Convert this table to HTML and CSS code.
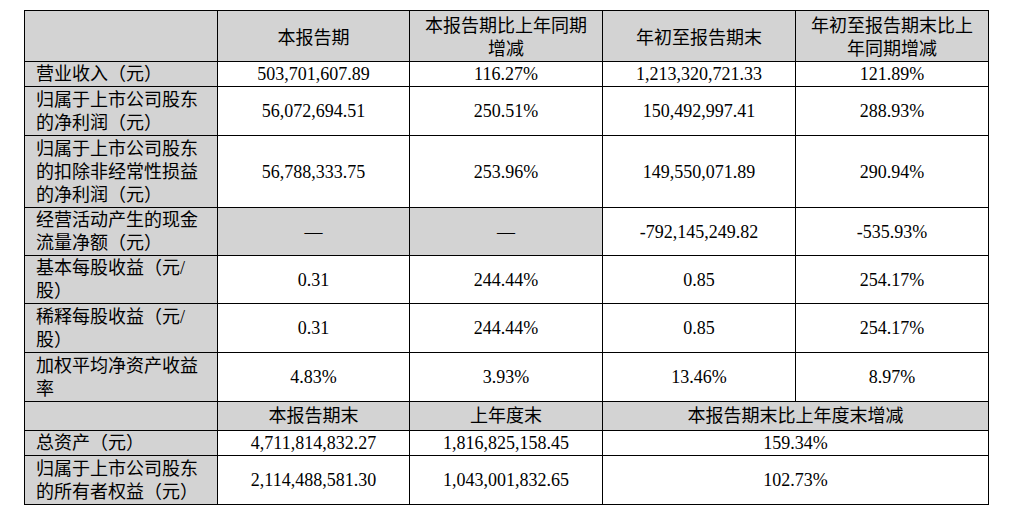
FILE: index.html
```html
<!DOCTYPE html>
<html lang="zh-CN">
<head>
<meta charset="utf-8">
<title>主要财务数据</title>
<link rel="stylesheet" href="styles.css">
</head>
<body>
<table class="fin">
  <colgroup>
    <col class="c-label"><col class="c-a"><col class="c-b"><col class="c-c"><col class="c-d">
  </colgroup>
  <tr class="h49 head">
    <th class="gray"></th>
    <th class="gray">本报告期</th>
    <th class="gray">本报告期比上年同期<br>增减</th>
    <th class="gray">年初至报告期末</th>
    <th class="gray">年初至报告期末比上<br>年同期增减</th>
  </tr>
  <tr class="h24">
    <td class="label">营业收入（元）</td>
    <td>503,701,607.89</td>
    <td>116.27%</td>
    <td>1,213,320,721.33</td>
    <td>121.89%</td>
  </tr>
  <tr class="h49">
    <td class="label">归属于上市公司股东<br>的净利润（元）</td>
    <td>56,072,694.51</td>
    <td>250.51%</td>
    <td>150,492,997.41</td>
    <td>288.93%</td>
  </tr>
  <tr class="h72">
    <td class="label">归属于上市公司股东<br>的扣除非经常性损益<br>的净利润（元）</td>
    <td>56,788,333.75</td>
    <td>253.96%</td>
    <td>149,550,071.89</td>
    <td>290.94%</td>
  </tr>
  <tr class="h48">
    <td class="label">经营活动产生的现金<br>流量净额（元）</td>
    <td class="gray">—</td>
    <td class="gray">—</td>
    <td>-792,145,249.82</td>
    <td>-535.93%</td>
  </tr>
  <tr class="h48">
    <td class="label">基本每股收益（元/<br>股）</td>
    <td>0.31</td>
    <td>244.44%</td>
    <td>0.85</td>
    <td>254.17%</td>
  </tr>
  <tr class="h49">
    <td class="label">稀释每股收益（元/<br>股）</td>
    <td>0.31</td>
    <td>244.44%</td>
    <td>0.85</td>
    <td>254.17%</td>
  </tr>
  <tr class="h49">
    <td class="label">加权平均净资产收益<br>率</td>
    <td>4.83%</td>
    <td>3.93%</td>
    <td>13.46%</td>
    <td>8.97%</td>
  </tr>
  <tr class="h29">
    <th class="gray"></th>
    <th class="gray">本报告期末</th>
    <th class="gray">上年度末</th>
    <th class="gray" colspan="2">本报告期末比上年度末增减</th>
  </tr>
  <tr class="h24">
    <td class="label">总资产（元）</td>
    <td>4,711,814,832.27</td>
    <td>1,816,825,158.45</td>
    <td colspan="2">159.34%</td>
  </tr>
  <tr class="h49">
    <td class="label">归属于上市公司股东<br>的所有者权益（元）</td>
    <td>2,114,488,581.30</td>
    <td>1,043,001,832.65</td>
    <td colspan="2">102.73%</td>
  </tr>
</table>
</body>
</html>
```

FILE: styles.css
```css
html, body {
  margin: 0;
  padding: 0;
  background: #ffffff;
}

body {
  padding: 10px 0 0 24px;
  font-family: "Liberation Serif", "Noto Sans CJK SC", serif;
  font-size: 18px;
  color: #000000;
}

.fin {
  border-collapse: collapse;
  table-layout: fixed;
  width: 964px;
}

.c-label { width: 193px; }
.c-a { width: 192px; }
.c-b { width: 193px; }
.c-c { width: 193px; }
.c-d { width: 193px; }

.fin th,
.fin td {
  border: 1px solid #000000;
  padding: 1px 4px 0 4px;
  line-height: 23px;
  text-align: center;
  vertical-align: middle;
  font-weight: normal;
  white-space: nowrap;
  overflow: hidden;
}

.fin .label {
  text-align: left;
  padding-left: 11px;
  background: #d3d3d3;
}

.fin .gray {
  background: #d3d3d3;
}

.head th {
  padding-top: 4px;
}

.h24 { height: 24px; }
.h29 { height: 29px; }
.h48 { height: 48px; }
.h49 { height: 49px; }
.h72 { height: 72px; }
```
